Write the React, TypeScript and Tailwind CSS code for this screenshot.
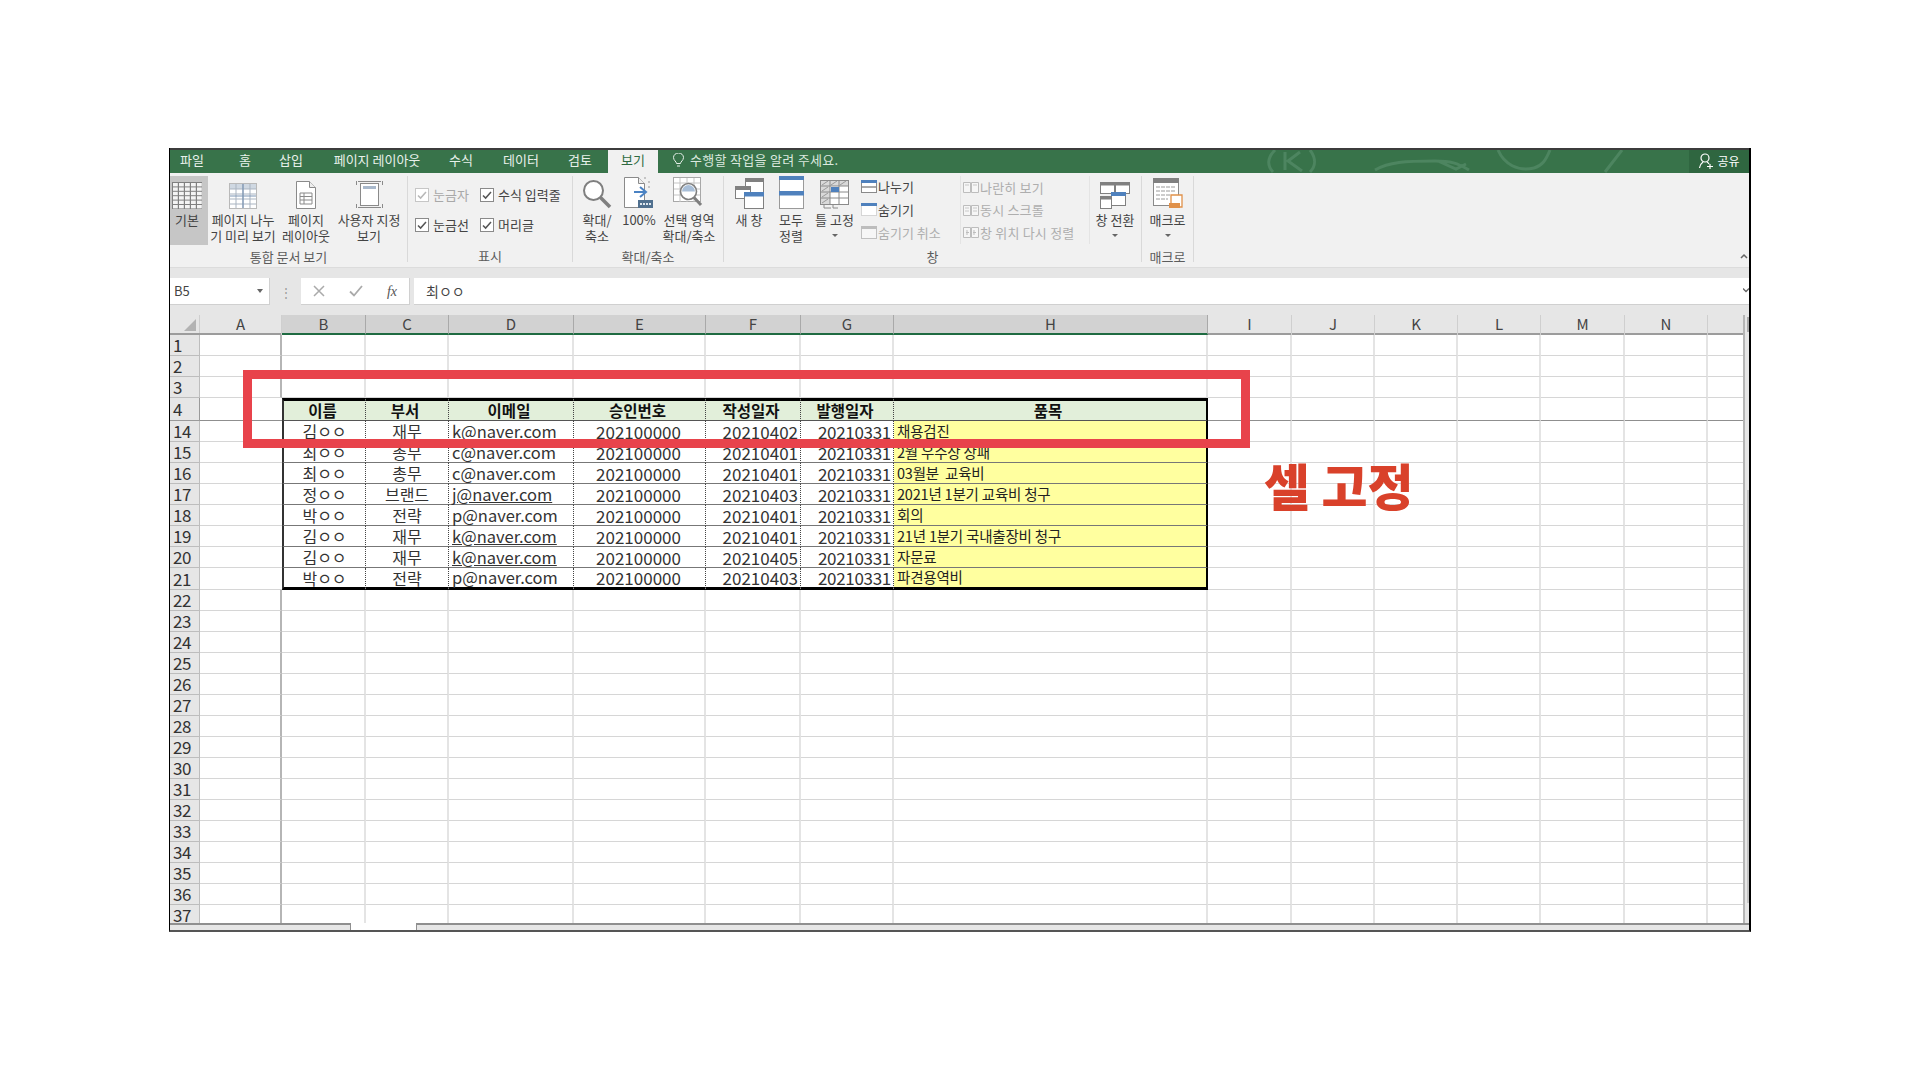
const columns = [
  { id: "A", w: "w-[82px]" },
  { id: "B", w: "w-[84px]", sel: true },
  { id: "C", w: "w-[83px]", sel: true },
  { id: "D", w: "w-[125px]", sel: true },
  { id: "E", w: "w-[132px]", sel: true },
  { id: "F", w: "w-[95px]", sel: true },
  { id: "G", w: "w-[93px]", sel: true },
  { id: "H", w: "w-[314px]", sel: true },
  { id: "I", w: "w-[84px]" },
  { id: "J", w: "w-[83px]" },
  { id: "K", w: "w-[83px]" },
  { id: "L", w: "w-[83px]" },
  { id: "M", w: "w-[84px]" },
  { id: "N", w: "w-[83px]" },
];

const tableWidths = ["w-[84px]", "w-[83px]", "w-[125px]", "w-[132px]", "w-[95px]", "w-[93px]", "w-[314px]"];
const plainAfter = columns.slice(8);

const tableHead = ["이름", "부서", "이메일", "승인번호", "작성일자", "발행일자", "품목"];

const tableRows = [
  { n: 14, name: "김ㅇㅇ", dept: "재무", mail: "k@naver.com", link: true, made: "20210402", item: "채용검진" },
  { n: 15, name: "최ㅇㅇ", dept: "총무", mail: "c@naver.com", made: "20210401", item: "2월 우수상 상패" },
  { n: 16, name: "최ㅇㅇ", dept: "총무", mail: "c@naver.com", made: "20210401", item: "03월분  교육비" },
  { n: 17, name: "정ㅇㅇ", dept: "브랜드", mail: "j@naver.com", link: true, made: "20210403", item: "2021년 1분기 교육비 청구" },
  { n: 18, name: "박ㅇㅇ", dept: "전략", mail: "p@naver.com", made: "20210401", item: "회의" },
  { n: 19, name: "김ㅇㅇ", dept: "재무", mail: "k@naver.com", link: true, made: "20210401", item: "21년 1분기 국내출장비 청구" },
  { n: 20, name: "김ㅇㅇ", dept: "재무", mail: "k@naver.com", link: true, made: "20210405", item: "자문료" },
  { n: 21, name: "박ㅇㅇ", dept: "전략", mail: "p@naver.com", made: "20210403", item: "파견용역비" },
];

const emptyAbove = [1, 2, 3];
const emptyBelow = [22, 23, 24, 25, 26, 27, 28, 29, 30, 31, 32, 33, 34, 35, 36, 37];
const tabs = [
  { label: "파일", w: "w-[44px]" },
  { label: "홈", w: "w-[62px]" },
  { label: "삽입", w: "w-[30px]" },
  { label: "페이지 레이아웃", w: "w-[142px]" },
  { label: "수식", w: "w-[26px]" },
  { label: "데이터", w: "w-[94px]" },
  { label: "검토", w: "w-[24px]" },
];

const RowNum = ({ n }: { n: number }) => (
  <div className="w-[30px] shrink-0 flex items-center pl-[3px] pb-[1px] bg-[#e6e6e6] border-r border-b border-[#bdbdbd] text-[17px] leading-none text-[#333] tracking-[-0.5px]">
    {n}
  </div>
);

const EmptyCells = ({ n }: { n: number }) => (
  <>
    <div className="w-[82px] shrink-0 border-r-2 border-b border-r-[#b5b5b5] border-b-[#d6d6d6]" />
    {tableWidths.map((w, i) => (
      <div key={i} className={`${w} shrink-0 border-r-2 border-b border-r-[#e4e4e4] border-b-[#d6d6d6]`} />
    ))}
    {plainAfter.map((c) => (
      <div key={c.id + n} className={`${c.w} shrink-0 border-r-2 border-b border-r-[#e4e4e4] border-b-[#d6d6d6]`} />
    ))}
    <div className="flex-1 border-b border-[#d6d6d6]" />
  </>
);

const AfterCells = ({ line }: { line: string }) => (
  <>
    {plainAfter.map((c) => (
      <div key={c.id} className={`${c.w} shrink-0 border-r-2 border-r-[#e4e4e4] border-b ${line}`} />
    ))}
    <div className={`flex-1 border-b ${line}`} />
  </>
);

const Check = ({ dim }: { dim?: boolean }) => (
  <svg width="14" height="14" viewBox="0 0 14 14" className="shrink-0">
    <rect x="0.5" y="0.5" width="13" height="13" fill="#fff" stroke={dim ? "#c6c6c6" : "#8a8a8a"} />
    <path d="M3 7.5l2.6 2.6L11 4" fill="none" stroke={dim ? "#b8b8b8" : "#555"} strokeWidth="1.5" />
  </svg>
);

const NormalIcon = () => (
  <svg width="30" height="27" viewBox="0 0 30 27">
    <rect width="30" height="27" fill="#808080" />
    {[0, 1, 2, 3, 4].map((c) =>
      [0, 1, 2, 3, 4, 5].map((r) => <rect key={`${c}-${r}`} x={1 + c * 6} y={1 + r * 4.4} width="4.8" height="3.4" fill="#f4f4f4" />)
    )}
  </svg>
);

const BreakIcon = () => (
  <svg width="28" height="26" viewBox="0 0 28 26">
    <rect x="0.5" y="0.5" width="27" height="25" fill="#fff" stroke="#b9b9b9" />
    <rect x="1" y="1" width="26" height="5" fill="#cfd8e2" />
    <path d="M1 6h26M1 11h26M1 16h26M1 21h26M7 1v24M14 1v24M21 1v24" stroke="#a9b4c1" />
    <path d="M14 1v24M1 13h26" stroke="#7d96b4" strokeWidth="1.2" />
  </svg>
);

const DocIcon = () => (
  <svg width="20" height="28" viewBox="0 0 20 28">
    <path d="M.5.5h13l6 6v21H.5z" fill="#fff" stroke="#8a8a8a" />
    <path d="M13.5.5v6h6" fill="#eee" stroke="#8a8a8a" />
    <path d="M4 12h12v11H4zM4 15.5h12M4 19h12M8 12v11" fill="none" stroke="#8a8a8a" />
  </svg>
);

const CustomViewIcon = () => (
  <svg width="29" height="29" viewBox="0 0 29 29">
    <path d="M3 1.5h23M3 27.5h23M1.5 1v4M27.5 1v4M1.5 24v4M27.5 24v4" stroke="#8a8a8a" fill="none" />
    <rect x="5.5" y="3.5" width="18" height="22" fill="#fff" stroke="#8a8a8a" />
    <rect x="8" y="6" width="13" height="3" fill="#a9b9cc" />
  </svg>
);

const ZoomIcon = () => (
  <svg width="30" height="30" viewBox="0 0 30 30">
    <circle cx="11.5" cy="11.5" r="9.5" fill="#fff" stroke="#7f7f7f" strokeWidth="2" />
    <path d="M18.5 18.5L28 28" stroke="#7f7f7f" strokeWidth="3.5" />
  </svg>
);

const HundredIcon = () => (
  <svg width="30" height="32" viewBox="0 0 30 32">
    <path d="M.5.5h14l6 6v24H.5z" fill="#fff" stroke="#8a8a8a" />
    <path d="M14.5.5v6h6" fill="#eee" stroke="#8a8a8a" />
    <path d="M20 1h2M25 4v2M25 9v2" stroke="#999" />
    <path d="M10 15h11M16 10l6 5-6 5" fill="none" stroke="#4a82c3" strokeWidth="2" />
    <rect x="14" y="23" width="15" height="8" fill="#50708f" />
    <path d="M16 27h11" stroke="#dfe7ef" strokeWidth="2" strokeDasharray="2 1" />
  </svg>
);

const ZoomSelIcon = () => (
  <svg width="32" height="32" viewBox="0 0 32 32">
    <rect x="0.5" y="0.5" width="27" height="24" fill="#fff" stroke="#a8a8a8" />
    <path d="M1 6h26M1 12h26M1 18h26M7 1v24M14 1v24M21 1v24" stroke="#c5c5c5" />
    <circle cx="15.5" cy="14.5" r="8" fill="#fff" stroke="#7f7f7f" strokeWidth="1.6" />
    <path d="M9 14.5a6.5 6.5 0 0 1 13 0z" fill="#a9bfd8" />
    <path d="M21 20.5L28 28" stroke="#7f7f7f" strokeWidth="3" />
  </svg>
);

const NewWindowIcon = () => (
  <svg width="29" height="31" viewBox="0 0 29 31">
    <rect x="10.5" y="0.5" width="18" height="16" fill="#fff" stroke="#808080" />
    <rect x="10" y="0" width="19" height="4" fill="#808080" />
    <rect x="0.5" y="8.5" width="15" height="12" fill="#fff" stroke="#808080" />
    <rect x="0" y="8" width="16" height="4" fill="#808080" />
    <rect x="9.5" y="14.5" width="19" height="16" fill="#fff" stroke="#808080" />
    <rect x="9" y="14" width="20" height="4.5" fill="#4f81bd" />
  </svg>
);

const ArrangeIcon = () => (
  <svg width="25" height="33" viewBox="0 0 25 33">
    <rect x="0.5" y="0.5" width="24" height="32" fill="#fff" stroke="#9a9a9a" />
    <rect width="25" height="4" fill="#4f81bd" />
    <rect y="15" width="25" height="4.5" fill="#4f81bd" />
  </svg>
);

const FreezeIcon = () => (
  <svg width="29" height="29" viewBox="0 0 29 29">
    <rect x="0.5" y="0.5" width="28" height="24" fill="#fff" stroke="#8a8a8a" />
    <path d="M1 1h27v5H1zM1 6h9v18H1z" fill="#d9d9d9" />
    <path d="M1 6h27M1 12h27M1 18h27M10 1v24M19 1v24" stroke="#8a8a8a" />
    <path d="M2 5l6-4M11 5l6-4M20 5l6-4M2 11l6-4M2 17l6-4M2 23l6-4" stroke="#9a9a9a" />
    <rect x="11" y="7" width="8" height="5" fill="#4f81bd" />
    <path d="M4 25v3h7M13 25v3h5" fill="none" stroke="#8a8a8a" />
  </svg>
);

const SplitIcon = () => (
  <svg width="16" height="13" viewBox="0 0 16 13">
    <rect x="0.5" y="0.5" width="15" height="12" fill="#fff" stroke="#8a8a8a" />
    <rect width="16" height="3" fill="#4f81bd" />
    <path d="M1 7h14" stroke="#555" />
  </svg>
);

const HideIcon = () => (
  <svg width="16" height="13" viewBox="0 0 16 13">
    <rect x="0.5" y="0.5" width="15" height="12" fill="#fff" stroke="#b5b5b5" strokeDasharray="1 1" />
    <rect width="16" height="3" fill="#4f81bd" />
  </svg>
);

const UnhideIcon = () => (
  <svg width="16" height="13" viewBox="0 0 16 13">
    <rect x="0.5" y="0.5" width="15" height="12" fill="#f6f6f6" stroke="#c0c0c0" />
    <rect width="16" height="3" fill="#bdbdbd" />
  </svg>
);

const DimPagesIcon = ({ kind }: { kind: number }) => (
  <svg width="16" height="13" viewBox="0 0 16 13">
    <path d="M.5 1.5h7v10h-7zM8.5 1.5h7v10h-7z" fill="#f6f6f6" stroke="#bdbdbd" />
    {kind === 1 && <path d="M2 4h4M10 4h4" stroke="#c8c8c8" />}
    {kind === 2 && <path d="M2 4h4M2 7h4M10 4h4M10 7h4" stroke="#c8c8c8" />}
    {kind === 3 && <path d="M3 6.5h3M10 6.5h3M4 4v5M11 4v5" stroke="#bdbdbd" />}
  </svg>
);

const SwitchIcon = () => (
  <svg width="30" height="27" viewBox="0 0 30 27">
    <rect x="0.5" y="0.5" width="14" height="11" fill="#fff" stroke="#808080" />
    <rect width="15" height="3.5" fill="#808080" />
    <rect x="15.5" y="0.5" width="14" height="11" fill="#fff" stroke="#808080" />
    <rect x="15" width="15" height="3.5" fill="#808080" />
    <rect x="0.5" y="14.5" width="11" height="12" fill="#fff" stroke="#808080" />
    <rect y="14" width="12" height="3.5" fill="#808080" />
    <rect x="11.5" y="10.5" width="14" height="13" fill="#fff" stroke="#808080" />
    <rect x="11" y="10" width="15" height="4" fill="#4f81bd" />
  </svg>
);

const MacroIcon = () => (
  <svg width="30" height="31" viewBox="0 0 30 31">
    <rect x="0.5" y="0.5" width="25" height="27" fill="#fff" stroke="#8a8a8a" />
    <rect width="26" height="5" fill="#808080" />
    <path d="M3 9h20M3 13h20M3 17h14M3 21h12" stroke="#9a9a9a" strokeDasharray="4 1" />
    <path d="M18 17h11v12H18z" fill="#fff" stroke="#e0914a" strokeWidth="1.3" />
    <rect x="16" y="25" width="11" height="5" fill="#e0914a" />
  </svg>
);

const Caret = () => <div className="w-0 h-0 border-x-[3px] border-x-transparent border-t-[3px] border-t-[#666]" />;

const BigButton = ({
  w,
  icon,
  lines,
  active,
  caret,
  pad,
}: {
  w: string;
  icon: React.ReactNode;
  lines: string[];
  active?: boolean;
  caret?: boolean;
  pad?: string;
}) => (
  <div className={`${w} shrink-0 h-[69px] flex flex-col items-center ${pad ?? ""} ${active ? "bg-[#c6c6c6]" : ""}`}>
    <div className="h-[36px] flex items-end pb-[3px] justify-center">{icon}</div>
    {lines.map((l) => (
      <div key={l} className="h-[16px] leading-[16px] whitespace-nowrap">
        {l}
      </div>
    ))}
    {caret && (
      <div className="h-[14px] flex items-center">
        <Caret />
      </div>
    )}
  </div>
);

const Group = ({ w, label, children }: { w: string; label: string; children: React.ReactNode }) => (
  <div className={`${w} shrink-0 flex flex-col border-r border-[#d9d9d9] mt-[3px] mb-[5px]`}>
    <div className="h-[69px] flex">{children}</div>
    <div className="flex-1 flex items-center justify-center leading-none pt-[5px] text-[#5c5c5c]">{label}</div>
  </div>
);

const SmallItem = ({ icon, text, dim }: { icon: React.ReactNode; text: string; dim?: boolean }) => (
  <div className={`flex items-center gap-[1px] h-[23px] whitespace-nowrap ${dim ? "text-[#aeaeae]" : "text-[#444]"}`}>
    {icon}
    <span>{text}</span>
  </div>
);

const CheckItem = ({ text, dim }: { text: string; dim?: boolean }) => (
  <div className={`flex items-center h-[20px] gap-[4px] whitespace-nowrap ${dim ? "text-[#a8a8a8]" : "text-[#444]"}`}>
    <Check dim={dim} />
    <span>{text}</span>
  </div>
);

const App = () => (
  <div className="w-[1920px] h-[1080px] bg-white pt-[148px] pl-[169px] overflow-hidden relative font-['Noto_Sans_CJK_KR','Noto_Sans',sans-serif]">
    <div className="w-[1582px] h-[784px] flex flex-col border-l border-r-2 border-black border-b-2 border-b-[#555] overflow-hidden">
      {/* title tabs */}
      <div className="h-[25px] shrink-0 relative flex bg-[#38734a] border-t-2 border-[#3c3c3c] text-white text-[13px] overflow-hidden">
        <svg className="absolute left-[1090px] top-0" width="420" height="24" viewBox="0 0 420 24" fill="none" stroke="#4d8560" strokeWidth="3">
          <path d="M15 0c-8 8-8 16-2 22M25 2v18M40 2L28 11l14 10M50 0c6 8 6 16 0 22" />
          <path d="M115 20c14-8 30-9 60-9 16 0 22 2 34 9M178 11l18 8 10-5" />
          <path d="M238 0c6 14 20 22 36 18 8-2 12-8 16-18M345 22L362 0" />
        </svg>
        <div className="relative flex items-center pb-[3px]">
          {tabs.map((t) => (
            <div key={t.label} className={`${t.w} flex justify-center whitespace-nowrap text-[#e8f1ea]`}>
              {t.label}
            </div>
          ))}
        </div>
        <div className="relative ml-[16px] mt-[-1px] w-[50px] pb-[2px] bg-[#f1f1f1] text-[#2f6b42] flex items-center justify-center">보기</div>
        <div className="relative flex items-center pb-[3px] ml-[15px] gap-[6px] tracking-[0.3px] text-[#dbe8df]">
          <svg width="11" height="15" viewBox="0 0 11 15" fill="none" stroke="#e8f1ea">
            <path d="M3.5 10.5c0-2-3-3-3-6a5 4.5 0 0 1 10 0c0 3-3 4-3 6zM4 13h3" />
          </svg>
          <span>수행할 작업을 알려 주세요.</span>
        </div>
        <div className="absolute right-0 top-0 bottom-0 w-[60px] pb-[2px] bg-[#2f6640] flex items-center justify-center gap-[3px] text-[12px]">
          <svg width="16" height="16" viewBox="0 0 16 16" fill="none" stroke="#fff" strokeWidth="1.2">
            <circle cx="7" cy="5" r="4" />
            <path d="M1.5 15c.5-3 2-5 3.500-6M9 9c1 .5 1.500 1 2 2M9 13.500h6M12 11v5" />
          </svg>
          <span>공유</span>
        </div>
      </div>

      {/* ribbon */}
      <div className="h-[94px] shrink-0 relative flex bg-[#f1f1f1] text-[13px] text-[#444]">
        <Group w="w-[238px]" label="통합 문서 보기">
          <BigButton w="w-[38px]" pad="pr-[4px]" icon={<NormalIcon />} lines={["기본"]} active />
          <BigButton w="w-[70px]" icon={<BreakIcon />} lines={["페이지 나누", "기 미리 보기"]} />
          <BigButton w="w-[56px]" icon={<DocIcon />} lines={["페이지", "레이아웃"]} />
          <BigButton w="w-[70px]" icon={<CustomViewIcon />} lines={["사용자 지정", "보기"]} />
        </Group>
        <Group w="w-[165px]" label="표시">
          <div className="flex flex-col gap-[10px] pt-[9px] pl-[7px] w-[72px]">
            <CheckItem text="눈금자" dim />
            <CheckItem text="눈금선" />
          </div>
          <div className="flex flex-col gap-[10px] pt-[9px]">
            <CheckItem text="수식 입력줄" />
            <CheckItem text="머리글" />
          </div>
        </Group>
        <Group w="w-[151px]" label="확대/축소">
          <BigButton w="w-[48px]" icon={<ZoomIcon />} lines={["확대/", "축소"]} />
          <BigButton w="w-[36px]" icon={<HundredIcon />} lines={["100%"]} />
          <BigButton w="w-[64px]" icon={<ZoomSelIcon />} lines={["선택 영역", "확대/축소"]} />
        </Group>
        <Group w="w-[418px]" label="창">
          <BigButton w="w-[50px]" icon={<NewWindowIcon />} lines={["새 창"]} />
          <BigButton w="w-[34px]" icon={<ArrangeIcon />} lines={["모두", "정렬"]} />
          <BigButton w="w-[53px]" icon={<FreezeIcon />} lines={["틀 고정"]} caret />
          <div className="w-[99px] shrink-0 flex flex-col mt-[-1px]">
            <SmallItem icon={<SplitIcon />} text="나누기" />
            <SmallItem icon={<HideIcon />} text="숨기기" />
            <SmallItem icon={<UnhideIcon />} text="숨기기 취소" dim />
          </div>
          <div className="w-[130px] h-[68px] shrink-0 flex flex-col pl-[2px] tracking-[0.2px] border-x border-[#e4e4e4]">
            <SmallItem icon={<DimPagesIcon kind={1} />} text="나란히 보기" dim />
            <SmallItem icon={<DimPagesIcon kind={2} />} text="동시 스크롤" dim />
            <SmallItem icon={<DimPagesIcon kind={3} />} text="창 위치 다시 정렬" dim />
          </div>
          <BigButton w="w-[50px]" icon={<SwitchIcon />} lines={["창 전환"]} caret />
        </Group>
        <Group w="w-[52px]" label="매크로">
          <BigButton w="w-[51px]" icon={<MacroIcon />} lines={["매크로"]} caret />
        </Group>
        <svg className="absolute right-[1px] top-[80px]" width="8" height="6" viewBox="0 0 8 6" fill="none" stroke="#666" strokeWidth="1.5">
          <path d="M1 5l3-3 3 3" />
        </svg>
      </div>

      {/* formula bar */}
      <div className="h-[48px] shrink-0 bg-[#e6e6e6] pt-[10px] border-t border-[#dcdcdc]">
        <div className="h-[27px] flex">
          <div className="w-[100px] bg-white border-b border-r border-[#d0d0d0] flex items-center justify-between pl-[4px] pr-[6px] text-[13px] text-[#444]">
            <span>B5</span>
            <div className="w-0 h-0 border-x-[3.5px] border-x-transparent border-t-[4px] border-t-[#666]" />
          </div>
          <div className="w-[31px] flex items-center justify-center text-[#999] text-[12px]">⋮</div>
          <div className="w-[109px] bg-white border-b border-r border-[#d0d0d0] flex items-center justify-between pl-[12px] pr-[12px]">
            <svg width="12" height="12" viewBox="0 0 12 12" stroke="#aaa" strokeWidth="1.5">
              <path d="M1 1l10 10M11 1L1 11" />
            </svg>
            <svg width="14" height="12" viewBox="0 0 14 12" fill="none" stroke="#aaa" strokeWidth="1.8">
              <path d="M1 6.5l4 4L13 1" />
            </svg>
            <span className="font-['Liberation_Serif',serif] italic text-[14px] text-[#555]">fx</span>
          </div>
          <div className="w-[4px]" />
          <div className="flex-1 relative bg-white border-b border-[#d0d0d0] flex items-center pl-[12px] text-[14px] text-[#444]">
            최ㅇㅇ
            <svg className="absolute right-0 top-[9px]" width="6" height="6" viewBox="0 0 6 6" fill="none" stroke="#666" strokeWidth="1.3">
              <path d="M0 1.5l3 3 3-3" />
            </svg>
          </div>
        </div>
      </div>

      {/* sheet */}
      <div className="flex-1 min-h-0 flex">
        <div className="w-[1573px] flex flex-col min-h-0 overflow-hidden">
          {/* column heads */}
          <div className="h-[20px] shrink-0 flex bg-[#e6e6e6] text-[15px] leading-[18px] text-[#444] border-b-2 border-[#9c9c9c]">
            <div className="w-[30px] shrink-0 relative border-r border-[#cfcfcf]">
              <div className="absolute right-[3px] bottom-[2px] w-0 h-0 border-l-[12px] border-l-transparent border-b-[12px] border-b-[#b3b3b3]" />
            </div>
            {columns.map((c) => (
              <div
                key={c.id}
                className={`${c.w} shrink-0 text-center border-r mb-[-2px] ${
                  c.sel ? "bg-[#d2d2d2] border-[#a9a9a9] border-b-2 border-b-[#1f6b42]" : "border-[#cfcfcf]"
                }`}
              >
                {c.id}
              </div>
            ))}
            <div className="flex-1" />
          </div>

          {emptyAbove.map((n) => (
            <div key={n} className="h-[21px] shrink-0 flex">
              <RowNum n={n} />
              <EmptyCells n={n} />
            </div>
          ))}

          {/* table head, row 4 */}
          <div className="h-[23px] shrink-0 flex">
            <div className="w-[30px] shrink-0 flex items-center pl-[3px] pb-[1px] bg-[#e6e6e6] border-r border-b border-[#9a9a9a] text-[17px] leading-none text-[#333]">4</div>
            <div className="w-[82px] shrink-0 border-b border-[#8f8f8f]" />
            {tableHead.map((h, i) => (
              <div
                key={h}
                className={`${tableWidths[i]} shrink-0 flex items-center justify-center pr-[4px] bg-[#e2efda] border-t-[3px] border-t-black border-b border-b-[#555] text-[15.5px] font-bold leading-none text-[#111] ${
                  i === 0 ? "border-l-2 border-l-[#333]" : ""
                } ${i === 6 ? "border-r-2 border-r-black" : "border-r border-r-[#444] [border-right-style:dotted]"}`}
              >
                {h}
              </div>
            ))}
            <AfterCells line="border-[#8f8f8f]" />
          </div>

          {tableRows.map((r, idx) => {
            const last = idx === tableRows.length - 1;
            const edge = last ? "border-b-[3px] border-b-black" : "border-b border-b-[#777]";
            const dotted = `border-r border-r-[#444] [border-right-style:dotted] ${edge}`;
            return (
              <div key={r.n} className={`${last ? "h-[22px]" : "h-[21px]"} shrink-0 flex text-[#333] text-[17px] leading-none`}>
                <RowNum n={r.n} />
                <div className="w-[82px] shrink-0 border-b border-[#d6d6d6]" />
                <div className={`w-[84px] shrink-0 flex items-center justify-center text-[16px] border-l-2 border-l-[#333] ${dotted}`}>{r.name}</div>
                <div className={`w-[83px] shrink-0 flex items-center justify-center text-[16px] ${dotted}`}>{r.dept}</div>
                <div className={`w-[125px] shrink-0 flex items-center pl-[3px] text-[16.5px] whitespace-nowrap ${dotted} ${r.link ? "underline" : ""}`}>{r.mail}</div>
                <div className={`w-[132px] shrink-0 flex items-center justify-center pr-[2px] ${dotted}`}>202100000</div>
                <div className={`w-[95px] shrink-0 flex items-center justify-end pr-[2px] ${dotted}`}>{r.made}</div>
                <div className={`w-[93px] shrink-0 flex items-center justify-end pr-[2px] tracking-[-0.3px] ${dotted}`}>20210331</div>
                <div className={`w-[314px] shrink-0 flex items-center pl-[3px] bg-[#ffff9f] whitespace-pre text-[14.5px] tracking-[-0.2px] text-[#222] border-r-2 border-r-black ${edge}`}>{r.item}</div>
                <AfterCells line="border-[#d6d6d6]" />
              </div>
            );
          })}

          {emptyBelow.map((n) => (
            <div key={n} className="h-[21px] shrink-0 flex">
              <RowNum n={n} />
              <EmptyCells n={n} />
            </div>
          ))}
        </div>

        {/* vertical scrollbar */}
        <div className="flex-1 bg-[#e6e6e6] border-l-2 border-[#b5b5b5] pl-[2px] flex flex-col">
          <div className="h-[15px] mt-[2px] bg-white border border-[#aaa]" />
          <div className="h-[158px]" />
          <div className="h-[413px] bg-white border border-[#c4c4c4]" />
        </div>
      </div>

      {/* bottom bar */}
      <div className="h-[7px] shrink-0 flex bg-white">
        <div className="w-[181px] bg-[#e6e6e6] border-t-2 border-r border-[#8f8f8f]" />
        <div className="w-[65px]" />
        <div className="flex-1 bg-[#e6e6e6] border-t-2 border-l border-[#8f8f8f]" />
      </div>
    </div>

    {/* annotation */}
    <div className="absolute left-[243px] top-[370px] w-[1007px] h-[78px] border-[9px] border-[#e8434b]" />
    <div className="absolute left-[1264px] top-[454px] text-[50px] leading-[60px] font-black text-[#d9412a] whitespace-nowrap">셀 고정</div>
  </div>
);

export default App;
